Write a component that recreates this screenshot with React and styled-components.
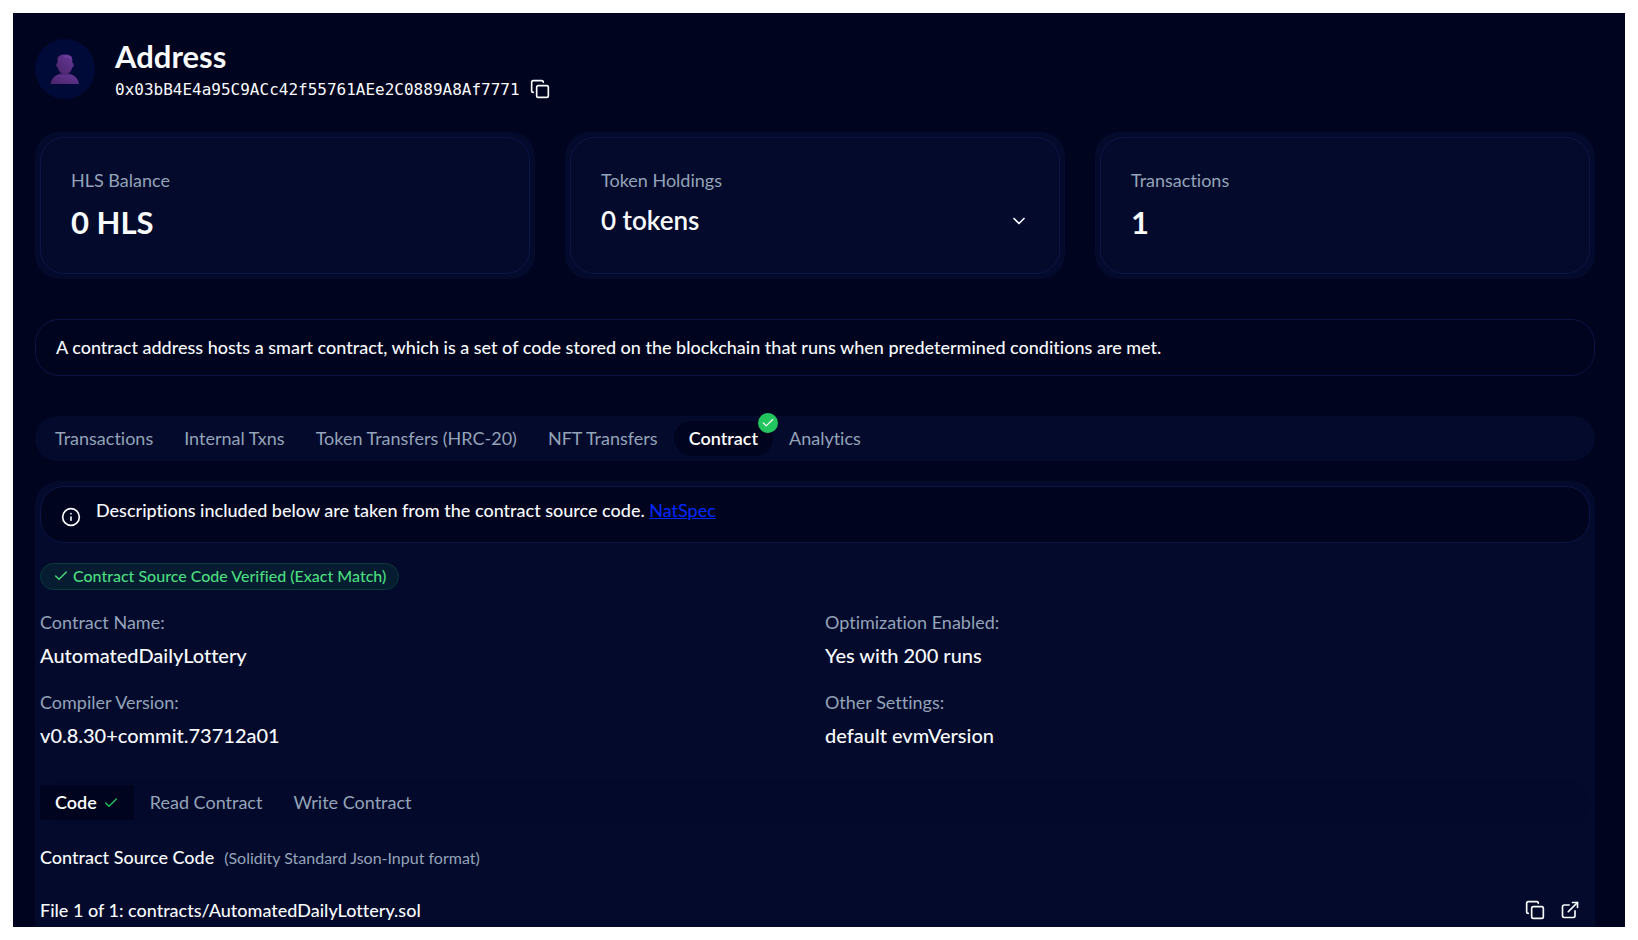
import React from "react";
import styled, { createGlobalStyle, css } from "styled-components";
import { Check, ChevronDown, Copy, ExternalLink, Info } from "lucide-react";

const color = {
  page: "#00041f",
  surface: "#030a2c",
  line: "#0d1545",
  text: "#f8fafc",
  muted: "#94a3b8",
  link: "#0029ff",
  green: "#22c55e",
};

const GlobalStyle = createGlobalStyle`
  * { box-sizing: border-box; }
  body { margin: 0; background: #ffffff; }
  button { margin: 0; border: 0; padding: 0; background: none; color: inherit; font: inherit; cursor: pointer; }
  h1, h2, h3, p, dl, dt, dd { margin: 0; }
  svg { display: block; flex: none; }
`;

const Frame = styled.div`
  height: 100vh;
  padding: 13px;
  overflow: hidden;
`;

const Page = styled.main`
  display: flex;
  flex-direction: column;
  height: 100%;
  padding: 26px 30px 0 22px;
  overflow: hidden;
  background: ${color.page};
  color: ${color.text};
  font: 500 18px/25px Lato, "Open Sans", sans-serif;
  font-variant-ligatures: none;
`;

const Header = styled.header`
  display: flex;
  flex: none;
  gap: 20px;
  height: 65px;
  margin-bottom: 28px;
`;

const Avatar = styled.div`
  flex: none;
  width: 60px;
  height: 60px;
  border-radius: 50%;
  overflow: hidden;
  background: #000a38;
`;

const Title = styled.h1`
  font-size: 31px;
  font-weight: 700;
  line-height: 35px;
`;

const HashRow = styled.div`
  display: flex;
  align-items: center;
  gap: 10px;
  height: 30px;
  font-family: "DejaVu Sans Mono", monospace;
  font-size: 16px;
  font-weight: 400;
`;

const Stats = styled.section`
  display: grid;
  grid-template-columns: repeat(3, 1fr);
  gap: 30px;
  flex: none;
`;

const StatShell = styled.div`
  display: flex;
  padding: 5px;
  border-radius: 24px;
  background: ${color.surface};
`;

const StatCard = styled.div`
  flex: 1;
  padding: 30px;
  border: 1px solid ${color.line};
  border-radius: 24px;
`;

const Label = styled.div`
  color: ${color.muted};
  font-weight: 400;
`;

const StatValue = styled.div`
  margin-top: 9px;
  font-size: 31px;
  font-weight: 700;
  line-height: 41px;
`;

const TokenButton = styled.button`
  display: flex;
  align-items: center;
  justify-content: space-between;
  width: 100%;
  margin-top: 9px;
  font-size: 26px;
  font-weight: 600;
  line-height: 37px;
`;

const Notice = styled.div`
  display: flex;
  flex: none;
  align-items: flex-start;
  gap: 15px;
  padding: ${(p) => (p.$withIcon ? "10px 20px 15px" : "15px 20px")};
  border: 1px solid ${color.line};
  border-radius: 24px;
  background: ${color.page};
  svg { margin-top: 10px; }
`;

const Intro = styled(Notice)`
  margin: 40px 0;
`;

const NoticeText = styled.p`
  padding: 1px 0;
`;

const Link = styled.a`
  color: ${color.link};
  font-weight: 400;
`;

const Tabs = styled.nav`
  display: flex;
  flex: none;
  gap: 1px;
  padding: 5px ${(p) => (p.$plain ? "0" : "5px")};
  border-radius: 24px;
  background: ${(p) => (p.$plain ? "#03092a" : color.surface)};
`;

const Tab = styled.button`
  display: flex;
  align-items: center;
  gap: 6px;
  height: 35px;
  && { padding: 0 15px; }
  color: ${color.muted};
  font-weight: 400;
  ${(p) =>
    p.$active &&
    css`
      position: relative;
      border-radius: ${p.$square ? "0" : "18px"};
      && { background: ${color.page}; color: #ffffff; font-weight: 600; }
    `}
`;

const VerifiedDot = styled.span`
  position: absolute;
  top: -8px;
  right: -5px;
  display: flex;
  align-items: center;
  justify-content: center;
  width: 20px;
  height: 20px;
  border-radius: 50%;
  background: ${color.green};
  color: #ffffff;
`;

const Panel = styled.section`
  flex: 1 0 auto;
  display: flex;
  flex-direction: column;
  margin-top: 20px;
  padding: 5px 5px 40px;
  border-radius: 24px;
  background: ${color.surface};
`;

const VerifiedBadge = styled.div`
  display: flex;
  align-items: center;
  align-self: flex-start;
  gap: 4px;
  margin: 20px 0;
  padding: 0 12px 2px;
  border: 1px solid #0a3a3c;
  border-radius: 14px;
  background: #061c30;
  color: #4ade80;
  font-size: 16px;
  line-height: 23px;
`;

const Details = styled.dl`
  display: grid;
  grid-template-columns: 1fr 1fr;
  gap: 20px;
  margin-bottom: 30px;
`;

const DetailLabel = styled(Label).attrs({ as: "dt" })`
  margin-bottom: 5px;
`;

const DetailValue = styled.dd`
  font-size: 20px;
  line-height: 30px;
`;

const SourceHeading = styled.div`
  display: flex;
  align-items: center;
  gap: 10px;
  margin: 20px 0;
`;

const SourceTitle = styled.h2`
  font: inherit;
`;

const SourceNote = styled.span`
  color: ${color.muted};
  font-size: 16px;
  font-weight: 400;
`;

const FileRow = styled.div`
  display: flex;
  align-items: center;
  justify-content: space-between;
  height: 40px;
  padding-right: 10px;
`;

const FileActions = styled.div`
  display: flex;
  gap: 15px;
`;

const stats = [
  { label: "HLS Balance", value: "0 HLS" },
  { label: "Token Holdings", value: "0 tokens", expandable: true },
  { label: "Transactions", value: "1" },
];

const tabs = [
  "Transactions",
  "Internal Txns",
  "Token Transfers (HRC-20)",
  "NFT Transfers",
  "Contract",
  "Analytics",
];

const details = [
  ["Contract Name:", "AutomatedDailyLottery"],
  ["Optimization Enabled:", "Yes with 200 runs"],
  ["Compiler Version:", "v0.8.30+commit.73712a01"],
  ["Other Settings:", "default evmVersion"],
];

function Bust() {
  return (
    <svg width="60" height="60" viewBox="0 0 60 60" aria-hidden="true">
      <defs>
        <linearGradient id="bust" x1="0" y1="1" x2="1" y2="0">
          <stop offset="0" stopColor="#4a2468" />
          <stop offset="0.6" stopColor="#5b3086" />
          <stop offset="1" stopColor="#6a3a9c" />
        </linearGradient>
      </defs>
      <path fill="url(#bust)" d="M22.500 20c.5-3 2.500-4.500 7.500-4.500s7 1.500 7.300 4.500v4c1.300 0 1.500 1 1.300 2.400-.2 1.400-.7 2-1.600 2-.4 4-3 6.600-7 6.600s-6.600-2.600-7-6.600c-.9 0-1.400-.6-1.600-2-.2-1.400 0-2.400 1.100-2.400z" />
      <path fill="url(#bust)" d="M15.500 45c1-6.500 6.200-10.500 14.300-10.500S43 38.500 44 45z" />
      <path d="M29 17.500c3 0 6 .2 7 2" stroke="#7a46ae" strokeWidth="2" strokeOpacity=".5" fill="none" />
      <path d="M24 34.500c3 1.200 9 1.200 12 0" stroke="#3d1f60" strokeWidth="1" strokeOpacity=".7" fill="none" />
    </svg>
  );
}

export default function App() {
  return (
    <Frame>
      <GlobalStyle />
      <Page>
        <Header>
          <Avatar>
            <Bust />
          </Avatar>
          <div>
            <Title>Address</Title>
            <HashRow>
              <span>0x03bB4E4a95C9ACc42f55761AEe2C0889A8Af7771</span>
              <button type="button" aria-label="Copy address">
                <Copy size={20} />
              </button>
            </HashRow>
          </div>
        </Header>

        <Stats>
          {stats.map((s) => (
            <StatShell key={s.label}>
              <StatCard>
                <Label>{s.label}</Label>
                {s.expandable ? (
                  <TokenButton type="button">
                    {s.value}
                    <ChevronDown size={20} />
                  </TokenButton>
                ) : (
                  <StatValue>{s.value}</StatValue>
                )}
              </StatCard>
            </StatShell>
          ))}
        </Stats>

        <Intro>
          <p>
            A contract address hosts a smart contract, which is a set of code stored on the
            blockchain that runs when predetermined conditions are met.
          </p>
        </Intro>

        <Tabs>
          {tabs.map((name) => (
            <Tab key={name} type="button" $active={name === "Contract"}>
              {name}
              {name === "Contract" && (
                <VerifiedDot>
                  <Check size={14} strokeWidth={2} />
                </VerifiedDot>
              )}
            </Tab>
          ))}
        </Tabs>

        <Panel>
          <Notice $withIcon>
            <Info size={20} />
            <NoticeText>
              Descriptions included below are taken from the contract source code.{" "}
              <Link href="#natspec">NatSpec</Link>
            </NoticeText>
          </Notice>

          <VerifiedBadge>
            <Check size={16} strokeWidth={2} />
            Contract Source Code Verified (Exact Match)
          </VerifiedBadge>

          <Details>
            {details.map(([label, value]) => (
              <div key={label}>
                <DetailLabel>{label}</DetailLabel>
                <DetailValue>{value}</DetailValue>
              </div>
            ))}
          </Details>

          <Tabs $plain>
            <Tab type="button" $active $square>
              Code
              <Check size={16} strokeWidth={2} color={color.green} />
            </Tab>
            <Tab type="button">Read Contract</Tab>
            <Tab type="button">Write Contract</Tab>
          </Tabs>

          <SourceHeading>
            <SourceTitle>Contract Source Code</SourceTitle>
            <SourceNote>(Solidity Standard Json-Input format)</SourceNote>
          </SourceHeading>

          <FileRow>
            <p>File 1 of 1: contracts/AutomatedDailyLottery.sol</p>
            <FileActions>
              <button type="button" aria-label="Copy source">
                <Copy size={20} />
              </button>
              <button type="button" aria-label="Open source in new tab">
                <ExternalLink size={20} />
              </button>
            </FileActions>
          </FileRow>
        </Panel>
      </Page>
    </Frame>
  );
}
